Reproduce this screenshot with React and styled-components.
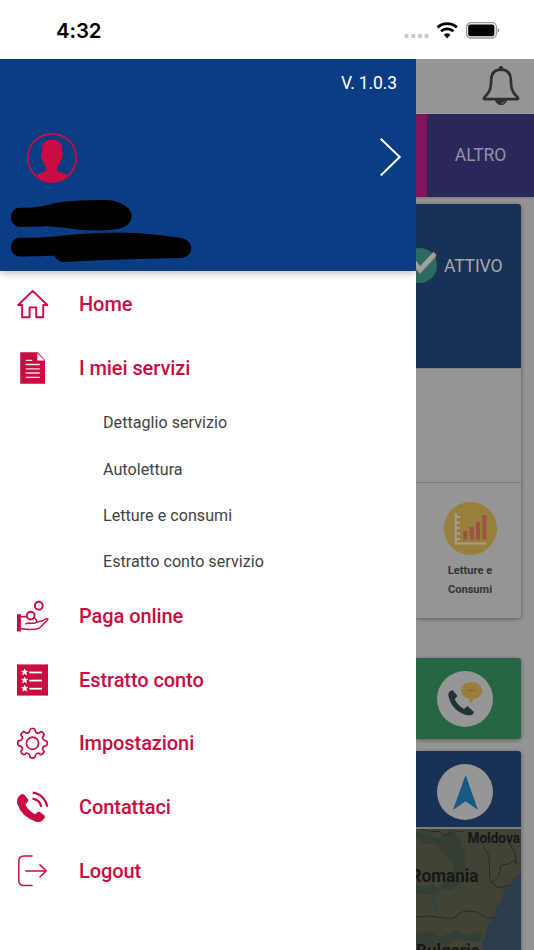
import React from 'react';
import styled, { createGlobalStyle } from 'styled-components';

const GlobalStyle = createGlobalStyle`
  * {
    box-sizing: border-box;
  }

  body {
    margin: 0;
    background: #fff;
    font-family: Roboto, 'Liberation Sans', sans-serif;
  }

  svg {
    display: block;
    flex-shrink: 0;
  }
`;

const Screen = styled.div`
  width: 534px;
  height: 950px;
  display: flex;
  flex-direction: column;
  overflow: hidden;
`;

const StatusBar = styled.header`
  height: 59px;
  flex-shrink: 0;
  display: flex;
  align-items: center;
  justify-content: space-between;
  padding: 2px 34px 0 56px;
`;

const Time = styled.span`
  font-family: Inter, sans-serif;
  font-size: 20.4px;
  font-weight: 600;
  letter-spacing: -0.1px;
  color: #000;
`;

const StatusIcons = styled.div`
  display: flex;
  align-items: center;
`;

const Body = styled.div`
  flex: 1;
  min-height: 0;
  display: flex;
`;

const Drawer = styled.nav`
  width: 416px;
  flex-shrink: 0;
  background: #fff;
`;

const DrawerHeader = styled.div`
  height: 212px;
  background: #0b3d85;
  box-shadow: 0 2px 8px rgba(0, 0, 0, 0.28);
  clip-path: inset(0 0 -14px 0);
`;

const Version = styled.div`
  height: 74px;
  padding: 13px 19px 0 0;
  text-align: right;
  font-size: 17.5px;
  letter-spacing: -0.12px;
  line-height: 22px;
  color: #fff;
`;

const ProfileRow = styled.div`
  height: 50px;
  display: flex;
  align-items: center;
  justify-content: space-between;
  padding: 0 14px 0 27px;
`;

const UserInfo = styled.div`
  padding: 16px 0 0 10px;
`;

const MenuList = styled.div`
  padding-top: 1px;
`;

const MenuItem = styled.div`
  height: 63.7px;
  display: flex;
  align-items: center;
  gap: 30px;
  padding-left: 17px;
  font-size: 20px;
  font-weight: 500;
  letter-spacing: -0.08px;
  color: #c90c41;
`;

const SubItem = styled.div`
  height: 46.2px;
  display: flex;
  align-items: center;
  padding: 1px 0 0 103px;
  font-size: 16.1px;
  letter-spacing: 0.03px;
  color: #424242;
`;

/* Part of the home page that stays visible, dimmed, beside the drawer */
const Backdrop = styled.main`
  flex: 1;
  min-width: 0;
  overflow: hidden;
  background: #949494;
`;

const TopBar = styled.div`
  height: 55px;
  display: flex;
  justify-content: flex-end;
  padding: 7px 14px 0 0;
  background: #959595;
  border-bottom: 1px solid #a2a2a0;
`;

const Tabs = styled.div`
  height: 83px;
  display: flex;
  box-shadow: 0 1px 2px rgba(0, 0, 0, 0.2);
`;

const Tab = styled.div`
  flex: ${({ $width }) => ($width ? `0 0 ${$width}px` : 1)};
  display: flex;
  align-items: center;
  justify-content: center;
  padding-bottom: 2px;
  background: ${({ $color }) => $color};
  font-size: 17.5px;
  letter-spacing: -0.1px;
  color: #9692a6;
`;

const Card = styled.section`
  height: ${({ $height }) => $height}px;
  margin: ${({ $top }) => $top}px 13px 0 0;
  overflow: hidden;
  border-radius: 0 3px 3px 0;
  background: ${({ $color }) => $color || '#959595'};
  box-shadow: 0 1px 4px rgba(0, 0, 0, 0.4);
`;

const StatusPanel = styled.div`
  height: 165px;
  display: flex;
  align-items: flex-start;
  padding-top: 43px;
  background: #1a3156;
  border-bottom: 1px solid #858585;
`;

const StatusLabel = styled.span`
  padding: 8px 0 0 7px;
  font-size: 17.6px;
  letter-spacing: -0.2px;
  line-height: 22px;
  color: #a5a8aa;
`;

const EmptyPanel = styled.div`
  height: 114px;
  border-bottom: 1px solid #7c7c7c;
`;

const ServiceTile = styled.div`
  display: flex;
  flex-direction: column;
  align-items: center;
  padding: 19px 0 0 3px;
  font-size: 11.1px;
  font-weight: 700;
  line-height: 19px;
  text-align: center;
  color: #343434;

  svg {
    margin-bottom: 6px;
  }
`;

const IconPanel = styled.div`
  height: ${({ $height }) => $height}px;
  display: flex;
  align-items: center;
  justify-content: center;
  padding: ${({ $offset }) => $offset || 0}px 7px 0 0;
`;

const Round = styled.div`
  width: 56px;
  height: 56px;
  border-radius: 50%;
  background: #969696;
`;

const CellularDots = () => (
  <svg width="25" height="20" viewBox="0 0 25 20" fill="#c9c9c9">
    {[2.5, 9.2, 15.9, 22.5].map((x) => (
      <circle key={x} cx={x} cy="15" r="2.3" />
    ))}
  </svg>
);

const Wifi = () => (
  <svg width="37" height="20" viewBox="0 0 37 20" fill="none" stroke="#000" strokeWidth="2.8">
    <path d="M8.6 6.4a14.3 14.3 0 0 1 19.2 0" />
    <path d="M12 10.3a9.2 9.2 0 0 1 12.4 0" />
    <path d="M14.9 13.7a5 5 0 0 1 6.6 0l-3.3 3.7z" fill="#000" stroke="none" />
  </svg>
);

const Battery = () => (
  <svg width="34" height="20" viewBox="0 0 34 20">
    <rect x="0.6" y="1.7" width="29.8" height="15.3" rx="4.4" fill="#fff" stroke="#999" strokeWidth="1.3" />
    <rect x="2.2" y="3.6" width="26.2" height="11.6" rx="2.2" fill="#000" />
    <path d="M31.7 7.1q1.5 .9 1.5 2.4t-1.5 2.4z" fill="#888" />
  </svg>
);

const Avatar = () => (
  <svg width="50" height="50" viewBox="0 0 50 50">
    <circle cx="25" cy="25" r="24.1" fill="none" stroke="#c90c41" strokeWidth="1.7" />
    <path
      fill="#c90c41"
      d="M15.2 18.500C14.500 10 17.500 7 25 7s10.500 3 9.900 11.500c1.600 1 1 7-.9 8.100-1 3.500-2.500 5.800-3.800 7.500v3.100c1 2 6.700 3 10.700 5.200A24.500 24.500 0 0 1 9.100 42.400c4-2.200 9-3.200 9.900-5.200v-3.100c-1.400-1.700-2.500-3.500-3.400-7-1.900-1.100-2.500-7.600-.4-8.600z"
    />
  </svg>
);

const Chevron = () => (
  <svg width="22" height="40" viewBox="0 0 22 40" fill="none" stroke="#fff" strokeWidth="2">
    <path d="M.7 .8 19.700 19 .7 37.500" />
  </svg>
);

const HiddenName = () => (
  <svg width="184" height="66" viewBox="0 0 184 66">
    <path d="M10 8.7C22 9 30 8.300 43 4.500 57 1.800 72 1 95 1c14 0 26.700 7 26.700 16 0 9.500-9 13-21.700 14-18 1.600-34-.6-46-2.300-9-.9-14-.7-18-1.700-4 .7-15 1-26 1-12 0-12-19.300 0-19.300z" />
    <path d="M10 38.700c14 .3 28-.5 45-2.500 20-1.800 40-2.400 62-2.400 20 .6 36 2.700 54 5.100 13.500 2.300 14 18.900 0 20-38 .8-80 1.800-117 4.100-5 .3-8.500-3.700-10-6.400-6 .5-19 .9-34 .9-12 0-12-18.800 0-18.800z" />
  </svg>
);

const HomeIcon = () => (
  <svg width="32" height="32" viewBox="0 0 32 32" fill="none" stroke="#c90c41" strokeWidth="1.9" strokeLinejoin="round">
    <path d="M1.2 17 15.700 2.900 30.300 17H26.200V29.200H19.200V19.400H12.600V29.200H5.100V17Z" />
  </svg>
);

const DocumentIcon = () => (
  <svg width="32" height="32" viewBox="0 0 32 32">
    <path d="M3.200 .3H20.800L28 8V31.700H3.200Z" fill="#c90c41" />
    <path d="M20.300 1.300V8.600H27.500Z" fill="#fff" />
    <path d="M9.200 8.300h5.600M9.200 12.500h13.200M9.200 16.800h13.200M9.200 21h13.200M9.200 25.300h13.200" stroke="#fbe0e7" strokeWidth="1.3" strokeLinecap="round" />
  </svg>
);

const PayIcon = () => (
  <svg width="32" height="32" viewBox="0 0 32 32" fill="none" stroke="#c90c41">
    <circle cx="21.800" cy="5.700" r="3.900" strokeWidth="2" />
    <circle cx="13.700" cy="15.600" r="3.900" strokeWidth="2" />
    <path d="M0 14.200H3.900V31.500H0Z" fill="#c90c41" stroke="none" />
    <path
      d="M4 16.700H9.700M17.600 18.200C20.600 20 20.400 23 17.500 23.200H10.500Q8.500 23.200 8.500 24.500M19.500 22.300 26 20.500 29.200 18.700C30.800 18.300 31.400 19.200 30.300 20.200L23.500 27Q21.500 29.200 18 29.300L12.300 29.500 4 28.800"
      strokeWidth="1.400"
      strokeLinejoin="round"
    />
  </svg>
);

const STAR = 'M0-3.300.9-1.100 3.200-1.100 1.400.5 2.100 2.800 0 1.500-2.100 2.800-1.400.5-3.200-1.100-.9-1.100Z';

const StatementIcon = () => (
  <svg width="32" height="32" viewBox="0 0 32 32">
    <rect y=".4" width="31" height="31.200" fill="#c90c41" />
    {[8.2, 16.3, 24.4].map((y) => (
      <g key={y}>
        <path d={STAR} transform={`translate(7.700 ${y})`} fill="#fff" stroke="#fff" strokeWidth=".5" />
        <path d={`M12.300 ${y + 0.3}H25`} stroke="#fff" strokeWidth="1.800" />
      </g>
    ))}
  </svg>
);

const GearIcon = () => (
  <svg width="32" height="32" viewBox="0 0 32 32" fill="none" stroke="#c90c41" strokeWidth="1.700" strokeLinejoin="round">
    <circle cx="15.500" cy="16.200" r="6.100" />
    <g transform="translate(15.500 16.200)">
      <path d="M-2.600-13Q-2.500-14.700-1-14.700H1Q2.500-14.700 2.600-13Q2.800-10.700 4.600-10.300Q6-9.500 7.600-11.100Q8.800-12 9.800-11L11-9.800Q12-8.800 11.100-7.600Q9.500-6 10.300-4.600Q10.700-2.800 13-2.600Q14.700-2.500 14.700-1V1Q14.700 2.500 13 2.600Q10.700 2.800 10.300 4.600Q9.500 6 11.100 7.600Q12 8.800 11 9.800L9.800 11Q8.800 12 7.600 11.100Q6 9.500 4.600 10.300Q2.800 10.700 2.600 13Q2.500 14.700 1 14.700H-1Q-2.500 14.700-2.600 13Q-2.800 10.700-4.600 10.300Q-6 9.500-7.600 11.100Q-8.800 12-9.800 11L-11 9.800Q-12 8.800-11.100 7.600Q-9.500 6-10.300 4.600Q-10.700 2.800-13 2.600Q-14.700 2.500-14.700 1V-1Q-14.700-2.500-13-2.600Q-10.700-2.800-10.300-4.600Q-9.500-6-11.100-7.600Q-12-8.800-11-9.800L-9.800-11Q-8.800-12-7.600-11.100Q-6-9.500-4.600-10.300Q-2.800-10.700-2.600-13Z" />
    </g>
  </svg>
);

const PhoneIcon = () => (
  <svg width="32" height="32" viewBox="0 0 32 32">
    <path
      fill="#c90c41"
      d="M2 5 4 3.500Q6 2.500 7.500 4L10.800 8Q12 9.800 10.500 11.200L9 12.800Q8.300 14 9.200 15.200 12 19.600 16.500 22.600 18 23.500 19.200 22.300L20.300 21.200Q21.700 20 23.200 21.200L27.200 24.300Q28.500 25.500 27.500 27L25.500 29.500Q23 31.800 19 30.700 4.500 26 .2 12.500-.700 8 2 5Z"
    />
    <g fill="none" stroke="#c90c41" strokeWidth="2.200">
      <path d="M15.700 1.700C23 2.300 28.800 8 30.200 15.600" />
      <path d="M15.500 7.700C20 8.500 23.500 11.500 24.300 15.900" />
    </g>
  </svg>
);

const LogoutIcon = () => (
  <svg width="32" height="32" viewBox="0 0 32 32" fill="none" stroke="#c90c41" strokeWidth="1.500" strokeLinecap="round" strokeLinejoin="round">
    <path d="M15 1H7Q1.800 1 1.800 6.500V25.200Q1.800 30.600 7 30.600H15" />
    <path d="M8.800 15.900H29M22.900 9.900 29.200 15.900 22.900 22" />
  </svg>
);

const Bell = () => (
  <svg width="38" height="41" viewBox="0 0 38 41" fill="none" stroke="#303030">
    <path
      d="M19 3.700C12 3.700 9.500 8 9.200 13.500 8.900 23.500 7.700 26 2.500 31.300 1.500 32.600 1.800 33.200 3.200 33.200H34.800C36.200 33.200 36.500 32.600 35.500 31.300 30.300 26 29.100 23.500 28.800 13.500 28.500 8 26 3.700 19 3.700Z"
      strokeWidth="2.700"
    />
    <circle cx="19" cy="2.200" r="2.200" fill="#303030" stroke="none" />
    <path d="M13.500 34H24.500A5.600 5.600 0 0 1 13.500 34Z" fill="#303030" strokeWidth="1" />
    <path d="M19.500 37.300Q22 37 22.500 35.200" stroke="#888" strokeWidth=".8" />
  </svg>
);

/* The left part of this badge lies under the drawer */
const CheckBadge = () => (
  <svg width="21" height="38" viewBox="14 0 21 38">
    <circle cx="17.500" cy="18.500" r="17.500" fill="#2b6c60" />
    <path d="M11.500 15 18 23.500 32.500 8.500" fill="none" stroke="#7f7f7f" strokeWidth="5" />
    <path d="M11.500 14 18 22.500 33 6.500" fill="none" stroke="#a0a0a0" strokeWidth="4.500" />
  </svg>
);

const ChartBadge = () => (
  <svg width="53" height="53" viewBox="0 0 53 53">
    <circle cx="26.500" cy="26.500" r="26.500" fill="#997f3c" />
    <path
      d="M11.700 11V41.500H42.300M12 15h4M12 20.500h4M12 26h4M12 31.500h4M12 37h4"
      fill="none"
      stroke="#a09e98"
      strokeWidth="2"
    />
    <g fill="#9c5343">
      <rect x="19.300" y="29" width="4" height="8.700" />
      <rect x="25.800" y="25" width="4" height="12.700" />
      <rect x="32" y="20" width="4" height="17.700" />
      <rect x="38.300" y="13.200" width="4.100" height="24.500" />
    </g>
  </svg>
);

const SupportIcon = () => (
  <svg width="56" height="56" viewBox="0 0 56 56">
    <path
      fill="#213337"
      d="M12.500 20.500 15.500 19 20.500 25 17.700 28.200Q20.500 34 27 38L30.500 35 37 41Q36 44.500 31.500 44.500 15 41 11.300 24.500 11 22 12.500 20.500Z"
    />
    <path fill="#997f38" d="M34.500 11.300c5.800 0 10.500 3.500 10.500 8.200s-3.700 8-8.500 8.300q-.8 3.500-4.600 5 1.300-2 .6-5.200c-4.800-.5-8.500-3.600-8.500-8.100 0-4.700 4.700-8.200 10.500-8.200z" />
    <path d="M30.200 19.500h2M33.500 19.500h2M36.800 19.500h2" stroke="#9c5033" strokeWidth="1.600" />
  </svg>
);

const LocateIcon = () => (
  <svg width="56" height="56" viewBox="0 0 56 56">
    <path d="M28.600 11 41 46 28.600 37.300 16 46Z" fill="#165987" />
  </svg>
);

const MapView = () => (
  <svg width="105" height="121" viewBox="0 0 105 121">
    <rect width="105" height="121" fill="#414435" />
    <g fill="#343f33">
      <path d="M0 3 11 5 24 9 34 1 43 8 49 24 50 39 44 55 35 61 23 59 29 53 37 48 38 34 25 23 22 15 10 15 0 9Z" />
      <path d="M0 56 8 59 16 56 25 60 22 64 10 66 0 64ZM0 104 15 102 25 108 39 101 50 106 67 102 64 113 42 111 28 118 0 115Z" />
      <path d="M87 58 94 59 93 66 87 67Z" />
    </g>
    <path d="M105 44 97 50 92 61 87 66 85 73 80 78 79 88 72 96 69 107 66 113 66 121H105Z" fill="#2b3d4d" />
    <g fill="none" stroke="#2b3e4f" strokeWidth="1.200">
      <path d="M18 63 18 75 22 84M75 52 79 57 84 57M90 20v5M100 31l5 5M84 64l2-3" />
    </g>
    <g fill="none" stroke="#262a27" strokeWidth="1">
      <path d="M5 0 14 3 24 2 29 7 37 3 47 2M67 18 73 27 74 51 82 59 94 56M75 55 83 47 85 36 93 35 97 31 100 35 99 23 95 18 93 12" />
      <path d="M0 88 13 87 36 90 48 82 61 83 70 89 79 89" />
    </g>
    <g fontFamily="Roboto, sans-serif" fontWeight="700" fill="#171817" stroke="#3e4035" strokeWidth="1" paintOrder="stroke">
      <text x="51.500" y="14.300" fontSize="13.800" textLength="52.500" lengthAdjust="spacingAndGlyphs">Moldova</text>
      <text x="-5.500" y="52.500" fontSize="17.600" textLength="68" lengthAdjust="spacingAndGlyphs">Romania</text>
      <text x="0" y="127.500" fontSize="17.600" textLength="64" lengthAdjust="spacingAndGlyphs">Bulgaria</text>
    </g>
  </svg>
);

const MapFrame = styled.div`
  border-top: 2px solid #777c80;
`;

const services = ['Dettaglio servizio', 'Autolettura', 'Letture e consumi', 'Estratto conto servizio'];

const menu = [
  { label: 'Home', Icon: HomeIcon },
  { label: 'I miei servizi', Icon: DocumentIcon, children: services },
  { label: 'Paga online', Icon: PayIcon },
  { label: 'Estratto conto', Icon: StatementIcon },
  { label: 'Impostazioni', Icon: GearIcon },
  { label: 'Contattaci', Icon: PhoneIcon },
  { label: 'Logout', Icon: LogoutIcon },
];

const App = () => {
  return (
    <Screen>
      <GlobalStyle />
      <StatusBar>
        <Time>4:32</Time>
        <StatusIcons>
          <CellularDots />
          <Wifi />
          <Battery />
        </StatusIcons>
      </StatusBar>

      <Body>
        <Drawer>
          <DrawerHeader>
            <Version>V. 1.0.3</Version>
            <ProfileRow>
              <Avatar />
              <Chevron />
            </ProfileRow>
            <UserInfo>
              <HiddenName />
            </UserInfo>
          </DrawerHeader>
          <MenuList>
            {menu.map(({ label, Icon, children }) => (
              <React.Fragment key={label}>
                <MenuItem>
                  <Icon />
                  {label}
                </MenuItem>
                {children && children.map((child) => <SubItem key={child}>{child}</SubItem>)}
              </React.Fragment>
            ))}
          </MenuList>
        </Drawer>

        <Backdrop>
          <TopBar>
            <Bell />
          </TopBar>
          <Tabs>
            <Tab $width={11} $color="#83155c" />
            <Tab $color="#2a285a">ALTRO</Tab>
          </Tabs>
          <Card $height={414} $top={7}>
            <StatusPanel>
              <CheckBadge />
              <StatusLabel>ATTIVO</StatusLabel>
            </StatusPanel>
            <EmptyPanel />
            <ServiceTile>
              <ChartBadge />
              <span>Letture e</span>
              <span>Consumi</span>
            </ServiceTile>
          </Card>
          <Card $height={81} $top={40} $color="#256743">
            <IconPanel $height={81}>
              <Round>
                <SupportIcon />
              </Round>
            </IconPanel>
          </Card>
          <Card $height={210} $top={12} $color="#1a3156">
            <IconPanel $height={76} $offset={5}>
              <Round>
                <LocateIcon />
              </Round>
            </IconPanel>
            <MapFrame>
              <MapView />
            </MapFrame>
          </Card>
        </Backdrop>
      </Body>
    </Screen>
  );
};

export default App;
